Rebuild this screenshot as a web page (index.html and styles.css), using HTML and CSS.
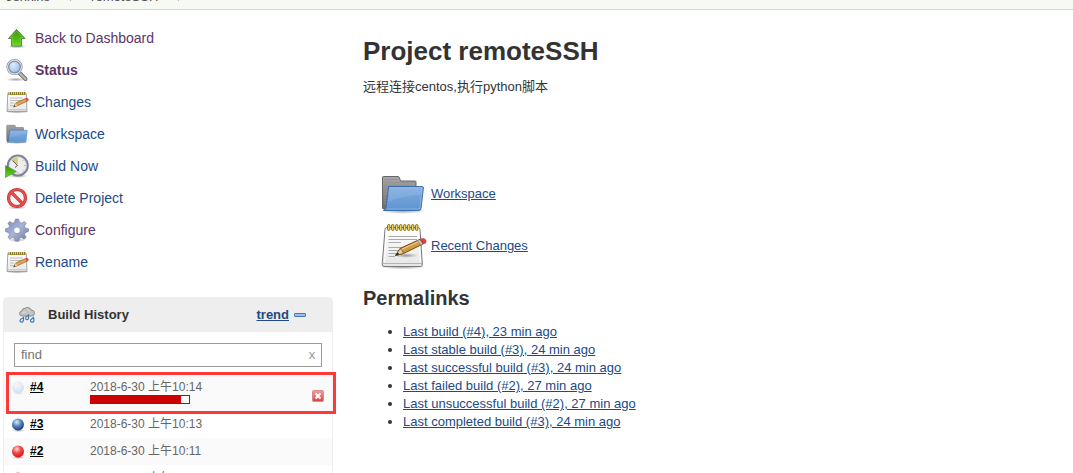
FILE: index.html
```html
<!DOCTYPE html>
<html lang="en">
<head>
    <meta charset="UTF-8">
    <meta name="viewport" content="width=device-width, initial-scale=1.0">
    <title>remoteSSH [Jenkins]</title>
    <link rel="stylesheet" href="styles.css">
</head>
<body>

    <!-- shared icons -->
    <svg class="sprite" aria-hidden="true">
        <defs>
            <linearGradient id="g-green" x1="0" y1="0" x2="0" y2="1"><stop offset="0" stop-color="#3f8f12"/><stop offset="1" stop-color="#62dd1c"/></linearGradient>
            <linearGradient id="g-blue" x1="0" y1="0" x2="0" y2="1"><stop offset="0" stop-color="#80ace0"/><stop offset="1" stop-color="#5e94d0"/></linearGradient>
            <linearGradient id="g-grey" x1="0" y1="0" x2="0" y2="1"><stop offset="0" stop-color="#a8a8a8"/><stop offset="1" stop-color="#6c6c6c"/></linearGradient>
            <linearGradient id="g-paper" x1="0" y1="0" x2="0" y2="1"><stop offset="0" stop-color="#ffffff"/><stop offset="1" stop-color="#e6e6e6"/></linearGradient>
            <linearGradient id="g-gear" x1="0" y1="0" x2="1" y2="1"><stop offset="0" stop-color="#7486b8"/><stop offset="0.5" stop-color="#a9b5d8"/><stop offset="1" stop-color="#6c7797"/></linearGradient>
            <linearGradient id="g-red" x1="0" y1="0" x2="0" y2="1"><stop offset="0" stop-color="#f0a0a0"/><stop offset="1" stop-color="#d24545"/></linearGradient>
            <radialGradient id="g-lens" cx="0.4" cy="0.35" r="0.7"><stop offset="0" stop-color="#e0edfb"/><stop offset="1" stop-color="#8eb6e4"/></radialGradient>
            <radialGradient id="g-ball-blue" cx="0.4" cy="0.3" r="0.7"><stop offset="0" stop-color="#e4ecef"/><stop offset="0.5" stop-color="#5585bd"/><stop offset="1" stop-color="#174186"/></radialGradient>
            <radialGradient id="g-ball-red" cx="0.4" cy="0.3" r="0.7"><stop offset="0" stop-color="#ffdada"/><stop offset="0.5" stop-color="#f34444"/><stop offset="1" stop-color="#d01a1a"/></radialGradient>
            <radialGradient id="g-ball-pale" cx="0.4" cy="0.3" r="0.7"><stop offset="0" stop-color="#f6f8fa"/><stop offset="1" stop-color="#d3dfee"/></radialGradient>
            <radialGradient id="g-shadow"><stop offset="0" stop-color="#000" stop-opacity="0.35"/><stop offset="1" stop-color="#000" stop-opacity="0"/></radialGradient>
        </defs>

        <symbol id="icon-up" viewBox="0 0 24 24">
            <ellipse cx="12" cy="20.500" rx="10" ry="2" fill="url(#g-shadow)"/>
            <path d="M11.500 3.500L20 12.500H16.500V20H6.500V12.500H3.500Z" fill="url(#g-green)" stroke="#3a7a17" stroke-width="0.800"/>
            <path d="M11.500 5L18 11.800H15.700V19.200H7.300V11.800H5.200Z" fill="none" stroke="#8be052" stroke-width="0.600" opacity="0.800"/>
        </symbol>

        <symbol id="icon-search" viewBox="0 0 24 24">
            <ellipse cx="11" cy="21.500" rx="10" ry="2" fill="url(#g-shadow)"/>
            <path d="M14 14.500L20.500 21" stroke="#6c6c6c" stroke-width="4" stroke-linecap="round"/>
            <path d="M14 14.500L20.500 21" stroke="#b9b9b9" stroke-width="2.200" stroke-linecap="round"/>
            <circle cx="9.500" cy="9" r="6.900" fill="url(#g-lens)" stroke="#8c8c8c" stroke-width="2.400"/>
            <circle cx="9.500" cy="9" r="6.900" fill="none" stroke="#dedede" stroke-width="1.200"/>
            <circle cx="9.500" cy="9" r="5.600" fill="none" stroke="#5886bd" stroke-width="0.700"/>
        </symbol>

        <symbol id="icon-notepad-small" viewBox="0 0 24 24">
            <ellipse cx="12" cy="22" rx="12" ry="1.500" fill="url(#g-shadow)"/>
            <path d="M2.800 3.500H21.200L22 21.500H2Z" fill="url(#g-paper)" stroke="#9a9a9a" stroke-width="0.900"/>
            <path d="M2 19.800H22" stroke="#b5b5b5" stroke-width="0.800"/>
            <path d="M3.500 3.500H20.500" stroke="#8b7622" stroke-width="3"/>
            <path d="M4 3.300H20.500" stroke="#e9cf5a" stroke-width="2.400" stroke-dasharray="1.100 0.900"/>
            <path d="M5 8H18M5 10.500H17M5 13H9M5 15.500H8" stroke="#b8b8b8" stroke-width="0.900"/>
            <path d="M8.500 17L10.500 13L20.500 8.500L22.500 11L12.500 15.800Z" fill="#e2a052" stroke="#8d5518" stroke-width="0.600"/>
            <path d="M8.500 17L10.500 13L12.500 15.800Z" fill="#e9cfa0"/>
            <path d="M8.500 17L9.500 15L10.500 16.200Z" fill="#222"/>
            <path d="M20 8.600L22 7.700Q24 8.500 23.800 10.200L22 11.200Z" fill="#d94d45"/>
        </symbol>

        <symbol id="icon-notepad" viewBox="0 0 48 48">
            <ellipse cx="24" cy="45" rx="23" ry="2.500" fill="url(#g-shadow)"/>
            <path d="M6 7.500Q6 5.500 8 5.500H39Q41 5.500 41 7.500L43.300 42Q43.500 44.500 41.500 44.500H5Q3 44.500 3.200 42Z" fill="url(#g-paper)" stroke="#777"/>
            <path d="M3.500 41.500H43" stroke="#b4b4b4"/>
            <path d="M5.500 40.500L7.300 8.500H39.500L41.500 40.500" fill="none" stroke="#fff"/>
            <path d="M9.500 14.500H38M9.500 17.500H38M9.500 20.500H22M9.500 25.500H33M9.500 28.500H29M9.500 31.500H17M9.500 34.500H16" stroke="#aaa"/>
            <g fill="#f0d550" stroke="#85701a" stroke-width="1">
                <rect x="8.500" y="2.500" width="2.400" height="6" rx="1.200"/><rect x="12.500" y="2.500" width="2.400" height="6" rx="1.200"/><rect x="16.500" y="2.500" width="2.400" height="6" rx="1.200"/><rect x="20.500" y="2.500" width="2.400" height="6" rx="1.200"/>
                <rect x="24.500" y="2.500" width="2.400" height="6" rx="1.200"/><rect x="28.500" y="2.500" width="2.400" height="6" rx="1.200"/><rect x="32.500" y="2.500" width="2.400" height="6" rx="1.200"/><rect x="36.500" y="2.500" width="2.400" height="6" rx="1.200"/>
            </g>
            <ellipse cx="27" cy="33.500" rx="12" ry="2.500" fill="url(#g-shadow)"/>
            <path d="M16.500 33.500L21 26.500L40.500 17.500Q44 18 44 22L24.500 31.500Z" fill="#d09a44" stroke="#683c0c" stroke-width="0.900"/>
            <path d="M22.500 27.500L41 19" stroke="#f1c977" stroke-width="1.200"/>
            <path d="M16.500 33.500L21 26.500Q24 28 24.500 31.500Z" fill="#ead0a0" stroke="#683c0c" stroke-width="0.700"/>
            <path d="M16.500 33.500L18.500 30.500L20.500 32.300Z" fill="#222"/>
            <path d="M38 18.700L40.500 17.500L44 22L41.500 23.200Q41 20 38 18.700Z" fill="#c9c9c9" stroke="#777" stroke-width="0.600"/>
            <path d="M40.500 17.500L43.500 16.500Q47.500 16.500 47 20.700L44 22Q44 18.500 40.500 17.500Z" fill="#ee3a44" stroke="#b32d35" stroke-width="0.600"/>
        </symbol>

        <symbol id="icon-folder" viewBox="0 0 48 48">
            <ellipse cx="24" cy="41" rx="23" ry="3" fill="url(#g-shadow)"/>
            <path d="M3.500 7Q3.500 6.500 4.500 6.500H19Q20 6.500 20.500 8L21.500 11H36Q37 11 37 12V39H5Q3.500 39 3.500 38Z" fill="url(#g-grey)" stroke="#666"/>
            <path d="M5 9.500H19M5 12.500H36M5 15.500H36M5 18.500H10M5 21.500H10M5 24.500H10M5 27.500H9M5 30.500H9M5 33.500H9" stroke="#8f8f8f" opacity="0.700"/>
            <path d="M9.500 16.500H43.500Q44.500 16.500 44.400 18L42 38.500Q41.800 40.500 40 40.500H4.500Q6.500 40 7 37.500Z" fill="url(#g-blue)" stroke="#3b6eae"/>
            <path d="M10.500 17.700H43.200L40.700 39H8" fill="none" stroke="#9fc2ea" stroke-width="0.800" opacity="0.700"/>
            <path d="M10.500 18H43L42 25Q25 25 9 32Z" fill="#fff" opacity="0.100"/>
        </symbol>

        <symbol id="icon-clock" viewBox="0 0 24 24">
            <ellipse cx="13" cy="22" rx="10" ry="2" fill="url(#g-shadow)"/>
            <circle cx="12.800" cy="11.500" r="10" fill="#ededec" stroke="#80809a" stroke-width="2"/>
            <circle cx="12.800" cy="11.500" r="8.700" fill="none" stroke="#c6c6cb" stroke-width="0.700"/>
            <path d="M12.800 10.500L6.500 5.500Q9.500 3.200 12.800 3.200Z" fill="#e2c96c"/>
            <path d="M7.500 6.500L12.500 11.300L10 13.500" fill="none" stroke="#555" stroke-width="1"/>
            <path d="M20.800 11.500H19.300M12.800 19.500V18M18.500 5.800L17.500 6.800M18.500 17.200L17.500 16.200" stroke="#999" stroke-width="0.800"/>
            <path d="M0.500 11.500L11.500 17.500L0.500 23.500Z" fill="url(#g-green)" stroke="#46932a" stroke-width="0.600"/>
        </symbol>

        <symbol id="icon-forbidden" viewBox="0 0 24 24">
            <ellipse cx="12" cy="21.500" rx="10" ry="2" fill="url(#g-shadow)"/>
            <circle cx="12" cy="12" r="8.500" fill="#f6f6f6" stroke="#c02626" stroke-width="3.200"/>
            <path d="M6.200 6.200L17.800 17.800" stroke="#c02626" stroke-width="3.200"/>
            <circle cx="12" cy="12" r="8.500" fill="none" stroke="#e64f4f" stroke-width="2.100"/>
            <path d="M6.200 6.200L17.800 17.800" stroke="#e64f4f" stroke-width="2.100"/>
        </symbol>

        <symbol id="icon-gear" viewBox="0 0 24 24">
            <ellipse cx="12" cy="22" rx="9" ry="2" fill="url(#g-shadow)"/>
            <path fill="url(#g-gear)" stroke="#77829f" stroke-width="0.600" fill-rule="evenodd" d="M10.500 1H13.500L14.600 4.300L16.700 5.200L19.400 3.500L21.200 5.300L19.500 8L20.300 9.900L23.500 10.800V13.500L20.300 14.700L19.500 16.600L21.200 19.200L19 21.200L16.500 19.500L14.500 20.300L13.500 23.200H10.500L9.500 20.300L7.500 19.500L4.800 21.200L2.900 19.300L4.500 16.600L3.700 14.700L0.500 13.500V10.800L3.700 9.900L4.500 8L2.900 5.300L4.800 3.500L7.500 5.200L9.400 4.300ZM12 9A3.300 3.300 0 1 0 12 15.600A3.300 3.300 0 1 0 12 9Z"/>
        </symbol>

        <symbol id="icon-rain" viewBox="0 0 16 16">
            <path d="M3.500 9Q0.500 9 0.500 6.500Q0.500 4.300 2.800 4Q3.300 1 6 1.300Q7.200 0 9.200 0.600Q11.500 0.800 12 3Q15.500 3.200 15.500 6Q15.500 9 12.500 9Z" fill="#c2c2bf" stroke="#858583" stroke-width="0.900"/>
            <path d="M3 6Q5 4 7 5.500M8 3Q10 2.500 11 4.500" fill="none" stroke="#dededb" stroke-width="1"/>
            <g fill="#d8e9fa" stroke="#3c77b5" stroke-width="1.100">
                <path d="M4.500 10.500Q5 15.200 2.500 15.200Q0 14.700 1.500 12.500Z"/>
                <path d="M9.500 8Q10.300 12.800 8 12.800Q5.800 12.300 7 10.200Z"/>
                <path d="M14.500 10.500Q16 15.200 13 15.200Q10.700 14.700 11.800 12.700Z"/>
            </g>
        </symbol>

        <symbol id="icon-ball-pale" viewBox="0 0 14 14"><ellipse cx="7" cy="12.500" rx="6" ry="1.300" fill="url(#g-shadow)" opacity="0.300"/><circle cx="6" cy="6.500" r="6" fill="url(#g-ball-pale)"/></symbol>
        <symbol id="icon-ball-blue" viewBox="0 0 14 14"><ellipse cx="6.500" cy="12.500" rx="6.500" ry="1.500" fill="url(#g-shadow)"/><circle cx="6" cy="6.500" r="6" fill="url(#g-ball-blue)"/></symbol>
        <symbol id="icon-ball-red" viewBox="0 0 14 14"><ellipse cx="6.500" cy="12.500" rx="6.500" ry="1.500" fill="url(#g-shadow)"/><circle cx="6" cy="6.500" r="6" fill="url(#g-ball-red)"/></symbol>

        <symbol id="icon-stop" viewBox="0 0 12 12">
            <rect x="0.500" y="0.500" width="11" height="11" rx="1" fill="url(#g-red)" stroke="#dc8888"/>
            <path d="M3.500 3.500L8.500 8.500M8.500 3.500L3.500 8.500" stroke="#fff" stroke-width="1.800"/>
        </symbol>
    </svg>

    <nav class="breadcrumbs" aria-label="Breadcrumb">
        <a href="#">Jenkins</a>
        <span class="separator"></span>
        <a href="#">remoteSSH</a>
        <span class="separator"></span>
    </nav>

    <div class="page">
        <aside class="side-panel">
            <nav class="tasks" aria-label="Tasks">
                <a class="task visited" href="#"><svg><use href="#icon-up"/></svg>Back to Dashboard</a>
                <a class="task visited active" href="#"><svg><use href="#icon-search"/></svg>Status</a>
                <a class="task" href="#"><svg><use href="#icon-notepad-small"/></svg>Changes</a>
                <a class="task" href="#"><svg><use href="#icon-folder"/></svg>Workspace</a>
                <a class="task" href="#"><svg><use href="#icon-clock"/></svg>Build Now</a>
                <a class="task" href="#"><svg><use href="#icon-forbidden"/></svg>Delete Project</a>
                <a class="task visited" href="#"><svg><use href="#icon-gear"/></svg>Configure</a>
                <a class="task" href="#"><svg><use href="#icon-notepad-small"/></svg>Rename</a>
            </nav>

            <section class="history">
                <header class="history-header">
                    <svg class="weather"><use href="#icon-rain"/></svg>
                    <h2>Build History</h2>
                    <a href="#">trend</a>
                    <button class="collapse" type="button" aria-label="Collapse"></button>
                </header>
                <form class="search">
                    <input type="text" placeholder="find" aria-label="Find build">
                    <button type="reset" aria-label="Clear">x</button>
                </form>
                <table class="builds">
                    <tbody>
                        <tr class="running">
                            <td class="ball"><svg><use href="#icon-ball-pale"/></svg></td>
                            <td class="number"><a href="#">#4</a></td>
                            <td class="date">
                                2018-6-30 上午10:14
                                <div class="progress"><div class="progress-done" style="width: 92%"></div></div>
                            </td>
                            <td class="stop"><button type="button" aria-label="Cancel build"><svg><use href="#icon-stop"/></svg></button></td>
                        </tr>
                        <tr>
                            <td class="ball"><svg><use href="#icon-ball-blue"/></svg></td>
                            <td class="number"><a href="#">#3</a></td>
                            <td class="date">2018-6-30 上午10:13</td>
                            <td class="stop"></td>
                        </tr>
                        <tr>
                            <td class="ball"><svg><use href="#icon-ball-red"/></svg></td>
                            <td class="number"><a href="#">#2</a></td>
                            <td class="date">2018-6-30 上午10:11</td>
                            <td class="stop"></td>
                        </tr>
                        <tr>
                            <td class="ball"><svg><use href="#icon-ball-red"/></svg></td>
                            <td class="number"><a href="#">#1</a></td>
                            <td class="date">2018-6-30 上午10:10</td>
                            <td class="stop"></td>
                        </tr>
                    </tbody>
                </table>
            </section>
        </aside>

        <main class="main-panel">
            <h1>Project remoteSSH</h1>
            <p class="description">远程连接centos,执行python脚本</p>

            <div class="shortcuts">
                <div class="shortcut"><svg><use href="#icon-folder"/></svg><a href="#">Workspace</a></div>
                <div class="shortcut"><svg><use href="#icon-notepad"/></svg><a href="#">Recent Changes</a></div>
            </div>

            <h2>Permalinks</h2>
            <ul class="permalinks">
                <li><a href="#">Last build (#4), 23 min ago</a></li>
                <li><a href="#">Last stable build (#3), 24 min ago</a></li>
                <li><a href="#">Last successful build (#3), 24 min ago</a></li>
                <li><a href="#">Last failed build (#2), 27 min ago</a></li>
                <li><a href="#">Last unsuccessful build (#2), 27 min ago</a></li>
                <li><a href="#">Last completed build (#3), 24 min ago</a></li>
            </ul>
        </main>
    </div>

</body>
</html>
```
FILE: styles.css
```css
:root {
    --text: #333;
    --link: #204a87;
    --visited: #5c3566;
    --muted: #666;
    --panel-border: #eee;
    --highlight: #ff3838;
}

*, *::before, *::after {
    box-sizing: border-box;
    margin: 0;
    padding: 0;
}

body {
    height: 100vh;
    overflow: hidden;
    background: #fff;
    color: var(--text);
    font-family: "Liberation Sans", Arial, "Noto Sans CJK SC", sans-serif;
    font-size: 13px;
    line-height: 18px;
}

a {
    color: var(--link);
}

svg {
    display: block;
    flex-shrink: 0;
}

button {
    border: 0;
    background: none;
    cursor: pointer;
    font: inherit;
}

.sprite {
    position: absolute;
    width: 0;
    height: 0;
}

.breadcrumbs {
    display: flex;
    align-items: flex-end;
    gap: 20px;
    height: 10px;
    padding: 0 6px 3px;
    overflow: hidden;
    border-bottom: 1px solid #d3d7cf;
    background: #f6faf2;
}

.breadcrumbs a {
    color: #4d4d4d;
    text-decoration: none;
}

.separator {
    width: 1px;
    height: 18px;
    margin-bottom: 5px;
    background: #bbb;
}

.page {
    display: flex;
    gap: 30px;
}

.side-panel {
    flex: 0 0 333px;
    padding: 12px 0 0 3px;
}

.tasks {
    display: flex;
    flex-direction: column;
    margin-bottom: 19px;
    padding-left: 2px;
}

.task {
    display: flex;
    align-items: center;
    gap: 6px;
    height: 32px;
    font-size: 14px;
    text-decoration: none;
}

.task svg {
    width: 24px;
    height: 24px;
}

.task.visited {
    color: var(--visited);
}

.task.active {
    font-weight: bold;
}

.history {
    border: 1px solid var(--panel-border);
    border-radius: 5px 5px 0 0;
}

.history-header {
    display: flex;
    align-items: center;
    height: 34px;
    padding: 0 26px 0 15px;
    background: #eee;
    font-weight: bold;
}

.weather {
    width: 16px;
    height: 16px;
    margin-right: 13px;
}

.history-header h2 {
    flex: 1;
    font-size: 13px;
}

.collapse {
    width: 12px;
    height: 4px;
    margin-left: 5px;
    border: 1px solid #4679b4;
    border-radius: 1px;
    background: #9dc0ea;
}

.search {
    display: flex;
    height: 24px;
    margin: 11px 10px 7px;
    border: 1px solid #999;
}

.search input {
    flex: 1;
    min-width: 0;
    padding: 0 6px;
    border: 0;
    outline: 0;
    font: inherit;
}

.search input::placeholder {
    color: #757575;
}

.search button {
    width: 18px;
    color: #999;
}

.builds {
    width: 100%;
    border-collapse: collapse;
    font-size: 12px;
    line-height: 16px;
}

.builds td {
    height: 27px;
    padding: 5px 0;
    vertical-align: top;
}

.builds tr:nth-child(odd) {
    background: #fafafa;
}

.builds .running {
    position: relative;
}

.builds .running td {
    padding-bottom: 7px;
}

/* frame around the build in progress */
.running::after {
    content: '';
    position: absolute;
    inset: -2px -4px -3px 2px;
    border: 3px solid var(--highlight);
    pointer-events: none;
}

.builds .ball {
    width: 26px;
    padding-left: 8px;
}

.ball svg {
    width: 14px;
    height: 14px;
    margin-top: 2px;
}

.number {
    width: 60px;
    font-weight: bold;
}

.number a {
    color: #000;
}

.date {
    color: var(--muted);
}

.builds .stop {
    width: 20px;
    vertical-align: bottom;
}

.stop button {
    display: block;
    margin-bottom: 2px;
}

.stop svg {
    width: 12px;
    height: 12px;
}

.progress {
    width: 100px;
    height: 9px;
    border: 1px solid #c00;
    background: #fff;
}

.progress-done {
    height: 100%;
    background: #c00;
}

.main-panel {
    flex: 1;
    padding: 26px 20px 0 0;
}

.main-panel h1 {
    margin-bottom: 12px;
    font-size: 26px;
    line-height: 30px;
}

.shortcuts {
    display: flex;
    flex-direction: column;
    gap: 4px;
    margin: 74px 0 15px;
    padding-left: 16px;
}

.shortcut {
    display: flex;
    align-items: center;
    gap: 4px;
}

.shortcut svg {
    width: 48px;
    height: 48px;
}

.main-panel h2 {
    margin-bottom: 12px;
    font-size: 20px;
    line-height: 26px;
}

.permalinks {
    padding-left: 40px;
}
```
